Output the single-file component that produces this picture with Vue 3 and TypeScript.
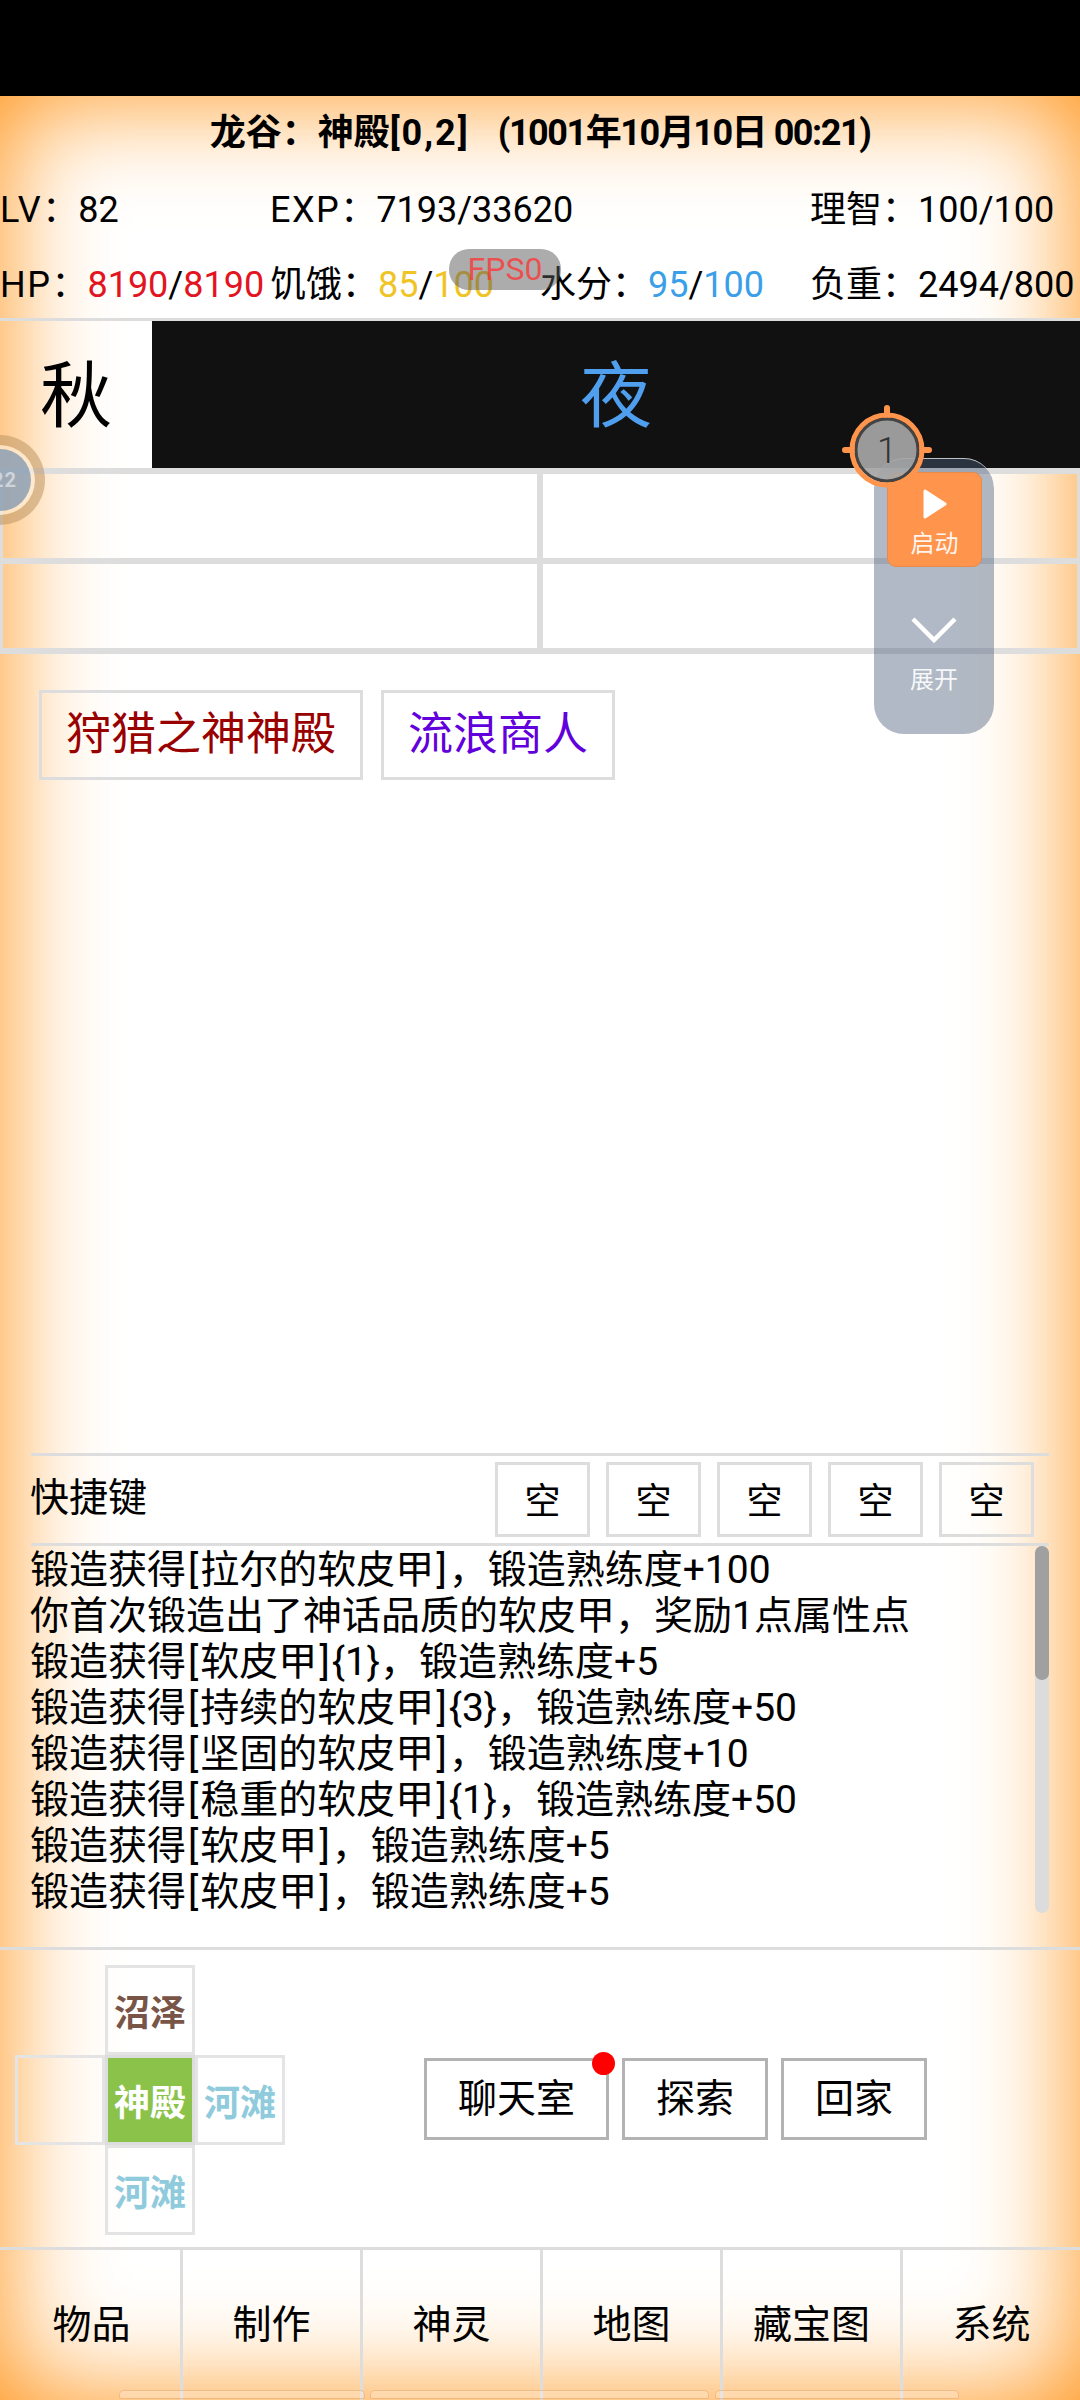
<script setup lang="ts">
interface Part {
  text: string
  color?: string
}

const statsTop: { label: string; value: string; wide?: boolean }[] = [
  { label: 'LV', value: '：82' },
  { label: 'EXP', value: '：7193/33620', wide: true },
  { label: '', value: '理智：100/100' },
]

const red = '#e3141f'
const yellow = '#f0c425'
const blue = '#3a9fe8'

const statsBottom: { label: string; name: string; parts: Part[] }[] = [
  { label: 'HP', name: '：', parts: [{ text: '8190', color: red }, { text: '/' }, { text: '8190', color: red }] },
  { label: '', name: '饥饿：', parts: [{ text: '85', color: yellow }, { text: '/' }, { text: '100', color: yellow }] },
  { label: '', name: '水分：', parts: [{ text: '95', color: blue }, { text: '/' }, { text: '100', color: blue }] },
  { label: '', name: '负重：', parts: [{ text: '2494/800' }] },
]

const shortcuts = ['空', '空', '空', '空', '空']

const logs = [
  '锻造获得[拉尔的软皮甲]，锻造熟练度+100',
  '你首次锻造出了神话品质的软皮甲，奖励1点属性点',
  '锻造获得[软皮甲]{1}，锻造熟练度+5',
  '锻造获得[持续的软皮甲]{3}，锻造熟练度+50',
  '锻造获得[坚固的软皮甲]，锻造熟练度+10',
  '锻造获得[稳重的软皮甲]{1}，锻造熟练度+50',
  '锻造获得[软皮甲]，锻造熟练度+5',
  '锻造获得[软皮甲]，锻造熟练度+5',
]

// brackets get a bit of air, the font's own are too tight
const splitLine = (line: string) => line.split(/(\[|\])/)

const tabs = ['物品', '制作', '神灵', '地图', '藏宝图', '系统']
</script>

<template>
  <div class="game">
    <div class="status-bar"></div>
    <div class="main">
      <div class="title">龙谷：神殿<span class="coords">[0,2]</span><span class="date">(1001年10月10日 00:21)</span></div>
      <div class="stats">
        <div v-for="s in statsTop" :key="s.value" class="stat" :class="{ wide: s.wide }"><span class="latin">{{ s.label }}</span>{{ s.value }}</div>
        <div v-for="s in statsBottom" :key="s.name" class="stat">
          <span class="latin">{{ s.label }}</span>{{ s.name }}<span v-for="(p, i) in s.parts" :key="i" :style="{ color: p.color }">{{ p.text }}</span>
        </div>
      </div>

      <div class="season-row">
        <div class="season">秋</div>
        <div class="daytime">夜</div>
      </div>

      <div class="slots">
        <div v-for="n in 4" :key="n" class="slot"></div>
      </div>

      <div class="actions">
        <div class="action temple">狩猎之神神殿</div>
        <div class="action merchant">流浪商人</div>
      </div>

      <div class="shortcuts">
        <div class="shortcut-label">快捷键</div>
        <div v-for="(k, i) in shortcuts" :key="i" class="key">{{ k }}</div>
      </div>

      <div class="log-wrap">
        <div class="log">
          <div v-for="(line, i) in logs" :key="i" class="log-line">
            <template v-for="(seg, j) in splitLine(line)" :key="j"><span v-if="seg === '[' || seg === ']'" class="bracket">{{ seg }}</span><template v-else>{{ seg }}</template></template>
          </div>
        </div>
        <div class="scroll-track"><div class="scroll-thumb"></div></div>
      </div>

      <div class="travel">
        <div class="map">
          <div class="cell blank"></div>
          <div class="cell swamp">沼泽</div>
          <div class="cell blank"></div>
          <div class="cell"></div>
          <div class="cell here"><span>神殿</span></div>
          <div class="cell beach">河滩</div>
          <div class="cell blank"></div>
          <div class="cell beach">河滩</div>
          <div class="cell blank"></div>
        </div>
        <div class="buttons">
          <div class="btn chat">聊天室<i class="dot"></i></div>
          <div class="btn">探索</div>
          <div class="btn">回家</div>
        </div>
      </div>

      <div class="tabs">
        <div v-for="t in tabs" :key="t" class="tab">{{ t }}</div>
      </div>

      <div class="pills">
        <div class="pill p1"></div>
        <div class="pill p2"></div>
        <div class="pill p3"></div>
      </div>

      <!-- floating stuff on top of the game -->
      <div class="fps">FPS0</div>

      <div class="side-ball">
        <div class="side-inner"><span>22</span></div>
      </div>

      <div class="float-panel">
        <div class="start">
          <svg width="26" height="32" viewBox="0 0 26 32">
            <path d="M3 3 L23 16 L3 29 Z" fill="#fff" stroke="#fff" stroke-width="3" stroke-linejoin="round" />
          </svg>
          <span>启动</span>
        </div>
        <div class="expand">
          <svg width="48" height="28" viewBox="0 0 48 28">
            <path d="M3 3 L24 24 L45 3" fill="none" stroke="#fff" stroke-width="4.5" />
          </svg>
          <span>展开</span>
        </div>
      </div>

      <svg class="target" width="90" height="90" viewBox="0 0 90 90">
        <path d="M45 3 V12 M3 45 H12 M78 45 H87" stroke="#ff944d" stroke-width="6" stroke-linecap="round" />
        <circle cx="45" cy="45" r="31" fill="#a6a6a6" fill-opacity="0.92" stroke="#444" stroke-width="3" />
        <circle cx="45" cy="45" r="35" fill="none" stroke="#ff944d" stroke-width="5" />
        <text x="45" y="58" text-anchor="middle" class="target-num">1</text>
      </svg>
    </div>
  </div>
</template>

<style>
html,
body {
  margin: 0;
  padding: 0;
  background: #fff;
}
</style>

<style scoped>
.game {
  width: 1080px;
  height: 2400px;
  display: flex;
  flex-direction: column;
  overflow: hidden;
  font-family: Roboto, "Noto Sans CJK SC", sans-serif;
  color: #000;
}

.status-bar {
  height: 96px;
  flex: none;
  background: #000;
}

.main {
  position: relative;
  flex: 1;
  display: flex;
  flex-direction: column;
  overflow: hidden;
  background: #fff;
}

/* orange glow round the edge of the screen */
.main::before {
  content: "";
  position: absolute;
  inset: 0;
  box-shadow: inset 0 0 110px #ff9010;
  pointer-events: none;
}

.main > * {
  position: relative;
}

.title {
  height: 72px;
  line-height: 75px;
  text-align: center;
  font-size: 36px;
  font-weight: 700;
  white-space: nowrap;
}

.coords {
  letter-spacing: 2px;
}

.date {
  margin-left: 28px;
  letter-spacing: -1.45px;
}

.stats {
  display: grid;
  grid-template-columns: repeat(4, 270px);
  grid-auto-rows: 75px;
  height: 150px;
  font-size: 36px;
}

.stat {
  line-height: 84px;
  height: 75px;
  white-space: nowrap;
}

.stat.wide {
  grid-column: span 2;
}

.latin {
  letter-spacing: 1.5px;
}

.season-row {
  display: flex;
  height: 147px;
  border-top: 3px solid #ddd;
  font-size: 72px;
}

.season {
  width: 152px;
  line-height: 152px;
  text-align: center;
}

.daytime {
  flex: 1;
  line-height: 152px;
  text-align: center;
  background: #111;
  color: #4f9fee;
}

.slots {
  display: grid;
  grid-template-columns: 540px 540px;
  border-top: 3px solid #ddd;
  border-bottom: 3px solid #ddd;
}

.slot {
  height: 84px;
  border: 3px solid #ddd;
}

.actions {
  flex: 1;
  display: flex;
  align-items: flex-start;
  gap: 18px;
  padding: 36px 0 0 39px;
}

.action {
  height: 84px;
  line-height: 84px;
  padding: 0 24px;
  border: 3px solid #ddd;
  font-size: 45px;
}

.temple {
  color: #990000;
}

.merchant {
  color: #6200dd;
}

.shortcuts {
  display: flex;
  align-items: center;
  gap: 16px;
  margin: 0 31px;
  padding: 6px 15px 6px 0;
  border-top: 3px solid #ddd;
  border-bottom: 3px solid #ddd;
}

.shortcut-label {
  flex: 1;
  font-size: 39px;
  line-height: 46px;
  margin: -3px 0 0 -1px;
}

.key {
  width: 89px;
  height: 69px;
  line-height: 75px;
  border: 3px solid #ddd;
  text-align: center;
  font-size: 36px;
}

.log-wrap {
  display: flex;
  height: 401px;
  margin: 0 31px;
}

.log {
  flex: 1;
  padding-top: 1px;
  margin-left: -1px;
  font-size: 39px;
  line-height: 46px;
  white-space: nowrap;
}

.bracket {
  padding: 0 2px;
}

.scroll-track {
  width: 14px;
  height: 367px;
  border-radius: 7px;
  background: #dcdcdc;
}

.scroll-thumb {
  height: 134px;
  border-radius: 7px;
  background: #a0a0a0;
}

.travel {
  display: flex;
  align-items: center;
  height: 297px;
  border-top: 3px solid #ddd;
}

.map {
  display: grid;
  grid-template-columns: repeat(3, 90px);
  grid-template-rows: repeat(3, 90px);
  margin-left: 15px;
  margin-top: 3px;
}

.cell {
  display: flex;
  align-items: center;
  justify-content: center;
  box-sizing: border-box;
  border: 3px solid #e4e4e4;
  font-size: 36px;
  font-weight: 700;
}

.cell.blank {
  border: none;
}

.swamp {
  color: #795548;
}

.beach {
  color: #8fcbdc;
}

.cell.here {
  border-color: #ddd;
  background: #8bc34a;
  color: #fff;
}

.buttons {
  display: flex;
  gap: 13px;
  margin-left: 139px;
}

.btn {
  position: relative;
  height: 76px;
  line-height: 76px;
  padding: 0 31px;
  border: 3px solid #b3b3b3;
  font-size: 39px;
}

.dot {
  position: absolute;
  top: -9px;
  right: -9px;
  width: 23px;
  height: 23px;
  border-radius: 50%;
  background: #f00;
}

.tabs {
  display: grid;
  grid-template-columns: repeat(6, 180px);
  padding-left: 3px;
  border-top: 3px solid #ddd;
  height: 150px;
}

.tab {
  border-right: 3px solid #ddd;
  line-height: 150px;
  text-align: center;
  font-size: 39px;
}

.pills {
  position: absolute !important;
  left: 0;
  right: 0;
  bottom: 1px;
  height: 9px;
}

.pill {
  position: absolute;
  top: 0;
  height: 9px;
  box-sizing: border-box;
  border-radius: 5px 5px 2px 2px;
  border: 1px solid rgba(225, 150, 80, 0.45);
  background: rgba(255, 255, 255, 0.25);
}

.p1 {
  left: 119px;
  width: 246px;
}

.p2 {
  left: 370px;
  width: 339px;
}

.p3 {
  left: 715px;
  width: 244px;
}

.fps {
  position: absolute !important;
  left: 449px;
  top: 153px;
  width: 112px;
  height: 41px;
  border-radius: 20px;
  background: rgba(90, 90, 90, 0.5);
  color: rgba(255, 50, 50, 0.75);
  font-size: 32px;
  line-height: 41px;
  text-align: center;
}

.side-ball {
  position: absolute !important;
  left: -45px;
  top: 339px;
  width: 90px;
  height: 90px;
  box-sizing: border-box;
  border: 10px solid rgba(190, 150, 100, 0.55);
  border-radius: 50%;
  padding: 4px;
  background: rgba(255, 240, 220, 0.6);
  background-clip: padding-box;
}

.side-inner {
  width: 62px;
  height: 62px;
  border-radius: 50%;
  background: rgba(120, 145, 175, 0.72);
  color: rgba(255, 255, 255, 0.5);
  font-size: 20px;
  font-weight: 700;
  line-height: 62px;
}

.side-inner span {
  display: block;
  width: 48px;
  text-align: right;
  letter-spacing: 1px;
}

.float-panel {
  position: absolute !important;
  left: 874px;
  top: 362px;
  width: 120px;
  height: 276px;
  box-sizing: border-box;
  border-radius: 30px;
  border-top: 1px solid rgba(255, 255, 255, 0.7);
  background: rgba(76, 95, 122, 0.44);
  padding-top: 13px;
  color: rgba(255, 255, 255, 0.92);
  font-size: 24px;
}

.start {
  display: flex;
  flex-direction: column;
  align-items: center;
  box-sizing: border-box;
  width: 95px;
  height: 95px;
  margin-left: 13px;
  padding-top: 15px;
  border-radius: 9px;
  border: 1px solid #e88a4a;
  background: #ff944d;
}

.start span {
  margin-top: 9px;
  line-height: 30px;
}

.expand {
  display: flex;
  flex-direction: column;
  align-items: center;
  margin-top: 49px;
}

.expand span {
  line-height: 30px;
  margin-top: 21px;
}

.target {
  position: absolute !important;
  left: 842px;
  top: 309px;
}

.target-num {
  font-size: 36px;
  font-weight: 300;
  fill: #333;
}
</style>
